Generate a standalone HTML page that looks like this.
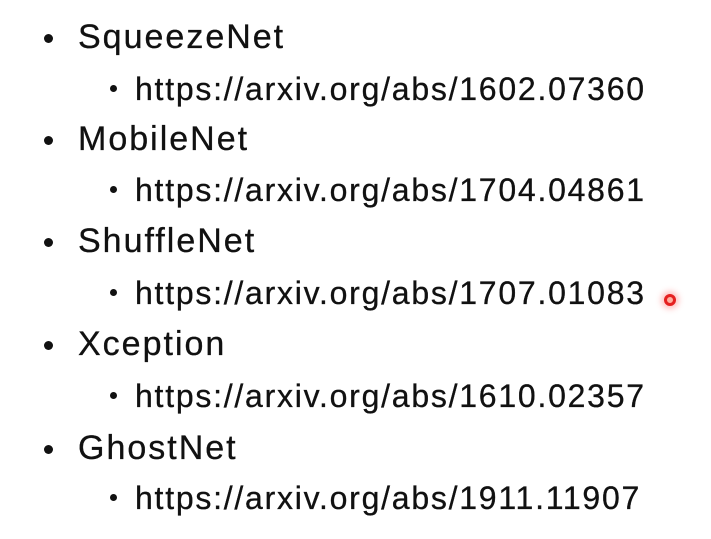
<!DOCTYPE html>
<html><head><style>
html,body{margin:0;width:711px;height:539px;background:#fff;overflow:hidden}
body{position:relative;font-family:"Liberation Sans",Carlito,sans-serif;color:#111}
.a,.b{position:absolute;white-space:nowrap;line-height:1;-webkit-text-stroke:0.3px #111}
.a{left:78px;font-size:34px;letter-spacing:2px}
.b{left:135px;font-size:32px;letter-spacing:1.75px}
.d1,.d2{position:absolute;border-radius:50%;background:#111}
.d1{left:44px;width:9px;height:9px}
.d2{left:110px;width:7px;height:7px}
.red{position:absolute;left:664px;top:294px;width:12px;height:12px;border-radius:50%;border:3px solid #e52020;background:#ffb0a0;box-sizing:border-box;box-shadow:0 0 6px 3px rgba(255,120,120,.45)}
</style></head><body>
<div class="d1" style="top:34px"></div><div class="a" style="top:20px">SqueezeNet</div>
<div class="d2" style="top:85px"></div><div class="b" style="top:73px">https://arxiv.org/abs/1602.07360</div>
<div class="d1" style="top:136px"></div><div class="a" style="top:122px">MobileNet</div>
<div class="d2" style="top:186px"></div><div class="b" style="top:174px">https://arxiv.org/abs/1704.04861</div>
<div class="d1" style="top:238px"></div><div class="a" style="top:224px">ShuffleNet</div>
<div class="d2" style="top:289px"></div><div class="b" style="top:277px">https://arxiv.org/abs/1707.01083</div>
<div class="d1" style="top:341px"></div><div class="a" style="top:327px">Xception</div>
<div class="d2" style="top:392px"></div><div class="b" style="top:380px">https://arxiv.org/abs/1610.02357</div>
<div class="d1" style="top:445px"></div><div class="a" style="top:431px">GhostNet</div>
<div class="d2" style="top:494px"></div><div class="b" style="top:482px">https://arxiv.org/abs/1911.11907</div>
<div class="red"></div>
</body></html>
